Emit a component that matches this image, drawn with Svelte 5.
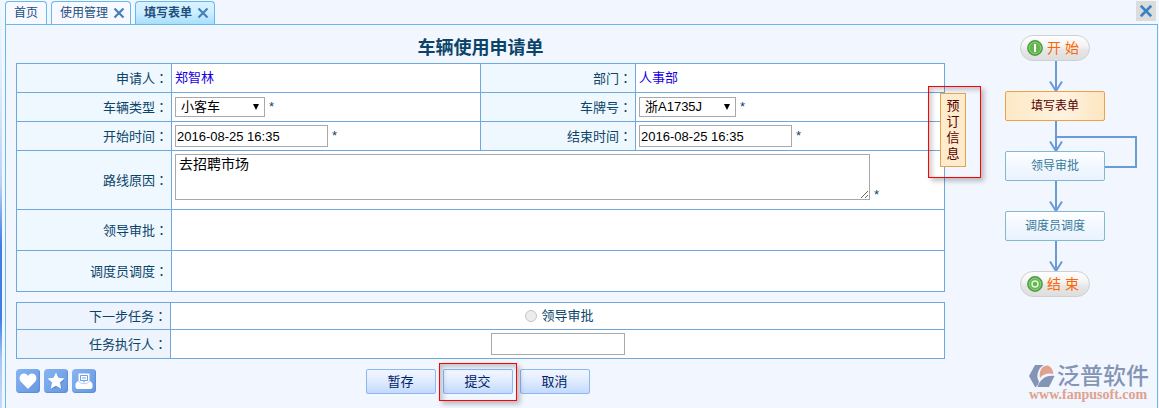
<script lang="ts">
	interface Tab {
		title: string;
		closable: boolean;
	}

	const tabs: Tab[] = [
		{ title: '首页', closable: false },
		{ title: '使用管理', closable: true },
		{ title: '填写表单', closable: true }
	];

	let active = $state('填写表单');
	let carType = $state('小客车');
	let plate = $state('浙A1735J');
	let startTime = $state('2016-08-25 16:35');
	let endTime = $state('2016-08-25 16:35');
	let reason = $state('去招聘市场');
	let executor = $state('');
</script>

{#snippet cross(size: number)}
	<svg width={size} height={size} viewBox="0 0 12 12" aria-hidden="true">
		<path d="M1.5 1.5L10.5 10.5M10.5 1.5L1.5 10.5" fill="none" stroke="currentColor" stroke-width="2.2" />
	</svg>
{/snippet}

{#snippet name(text: string)}
	{text}<span class="colon">：</span>
{/snippet}

{#snippet arrow()}
	<svg class="arrow" width="16" height="30" viewBox="0 0 16 30" aria-hidden="true">
		<path d="M9 0V30M3 20.500L9 30L15 20.500" fill="none" stroke="#6b9ad8" stroke-width="2" />
	</svg>
{/snippet}

<div class="page">
	<nav class="tabs">
		{#each tabs as tab}
			<div class="tab" class:active={tab.title === active}>
				<button class="tab-title" onclick={() => (active = tab.title)}>{tab.title}</button>
				{#if tab.closable}
					<button class="tab-close" aria-label="关闭">{@render cross(12)}</button>
				{/if}
			</div>
		{/each}
		<button class="close-all" aria-label="关闭">{@render cross(14)}</button>
	</nav>

	<div class="panel">
		<main class="main">
			<h1>车辆使用申请单</h1>

			<div class="sheet">
				<table class="form">
					<colgroup>
						<col class="c-label" />
						<col />
						<col class="c-label" />
						<col />
					</colgroup>
					<tbody>
						<tr>
							<th>{@render name('申请人')}</th>
							<td class="who">郑智林</td>
							<th>{@render name('部门')}</th>
							<td class="who">人事部</td>
						</tr>
						<tr>
							<th><label for="car-type">{@render name('车辆类型')}</label></th>
							<td>
								<div class="field">
									<span class="select type">
										<select id="car-type" bind:value={carType}><option>小客车</option></select>
									</span>
									<span class="req">*</span>
								</div>
							</td>
							<th><label for="plate">{@render name('车牌号')}</label></th>
							<td>
								<div class="field">
									<span class="select plate">
										<select id="plate" bind:value={plate}><option>浙A1735J</option></select>
									</span>
									<span class="req">*</span>
								</div>
							</td>
						</tr>
						<tr>
							<th><label for="start">{@render name('开始时间')}</label></th>
							<td>
								<div class="field">
									<input id="start" class="time" type="text" bind:value={startTime} />
									<span class="req">*</span>
								</div>
							</td>
							<th><label for="end">{@render name('结束时间')}</label></th>
							<td>
								<div class="field">
									<input id="end" class="time" type="text" bind:value={endTime} />
									<span class="req">*</span>
								</div>
							</td>
						</tr>
						<tr class="reason">
							<th><label for="reason">{@render name('路线原因')}</label></th>
							<td colspan="3">
								<div class="field bottom">
									<textarea id="reason" bind:value={reason}></textarea>
									<span class="req">*</span>
								</div>
							</td>
						</tr>
						<tr class="opinion">
							<th>{@render name('领导审批')}</th>
							<td colspan="3"></td>
						</tr>
						<tr class="opinion">
							<th>{@render name('调度员调度')}</th>
							<td colspan="3"></td>
						</tr>
					</tbody>
				</table>

				<div class="booking mark">
					<button>预订信息</button>
				</div>
			</div>

			<table class="next">
				<tbody>
					<tr>
						<th>{@render name('下一步任务')}</th>
						<td>
							<label class="choice"><input type="radio" name="next" disabled />领导审批</label>
						</td>
					</tr>
					<tr class="person">
						<th><label for="executor">{@render name('任务执行人')}</label></th>
						<td><input id="executor" type="text" bind:value={executor} /></td>
					</tr>
				</tbody>
			</table>

			<div class="toolbar">
				<div class="tools">
					<button aria-label="收藏">
						<svg width="24" height="24" viewBox="0 0 24 24">
							<path d="M13 21L5 13.500C2.500 10.500 4 5.500 8 5.500C10 5.500 11.200 6.500 12 8C12.800 6.500 14 5.500 16 5.500C20 5.500 21.500 10.500 19 13.500L12 20.500Z" fill="#3f6db8" opacity="0.5" />
							<path d="M12 20L5 13C2 9.500 4 4.500 8 4.500C10 4.500 11.300 5.500 12 7C12.700 5.500 14 4.500 16 4.500C20 4.500 22 9.500 19 13Z" fill="#fff" />
						</svg>
					</button>
					<button aria-label="关注">
						<svg width="24" height="24" viewBox="0 0 24 24">
							<path d="M13 5L15.500 10L21 10.700L17 14.500L18 20.500L13 17.800L8 20.500L8.500 15L5 10.500L10.500 10Z" fill="#3f6db8" opacity="0.5" />
							<path d="M12 3.500L14.500 8.700L20.500 9.500L16 13.600L17.200 19.700L12 16.800L6.800 19.700L8 13.600L3.500 9.500L9.500 8.700Z" fill="#fff" />
						</svg>
					</button>
					<button aria-label="打印">
						<svg width="24" height="24" viewBox="0 0 24 24">
							<path d="M6.500 4.500H17.500V12.500H19L20.500 15V18.500L19 20H5L3.500 18.500V15L5 12.500H6.500Z" fill="#fff" />
							<path d="M8.500 6.500H15.500V11.500H8.500ZM10 9H14M12 11.500V13.500" fill="none" stroke="#6f9fe4" />
							<path d="M6.500 12.500L9.500 14.500H14.500L17.500 12.500" fill="none" stroke="#b9d2f5" />
						</svg>
					</button>
				</div>
				<div class="actions">
					<button>暂存</button>
					<div class="submit">
						<button>提交</button>
						<span class="ring mark"></span>
					</div>
					<button>取消</button>
				</div>
			</div>
		</main>

		<aside>
			<div class="flow">
				<div class="pill">
					<svg width="16" height="16" viewBox="0 0 16 16" aria-hidden="true">
						<circle cx="8" cy="8" r="7.200" fill="#62b74b" stroke="#4f9c4c" stroke-width="1.400" />
						<circle cx="8" cy="8" r="5.700" fill="none" stroke="#8ccd7c" />
						<path d="M8 4V12" stroke="#fff" stroke-width="2" />
					</svg>
					开 始
				</div>
				{@render arrow()}
				<div class="step current">填写表单</div>
				{@render arrow()}
				<div class="step">
					领导审批
					<svg class="loop" width="82" height="34" viewBox="0 0 82 34" aria-hidden="true">
						<path d="M0 2H80V32H49" fill="none" stroke="#6b9ad8" stroke-width="2" />
					</svg>
				</div>
				{@render arrow()}
				<div class="step">调度员调度</div>
				{@render arrow()}
				<div class="pill">
					<svg width="16" height="16" viewBox="0 0 16 16" aria-hidden="true">
						<circle cx="8" cy="8" r="7.200" fill="#62b74b" stroke="#4f9c4c" stroke-width="1.400" />
						<circle cx="8" cy="8" r="5.700" fill="none" stroke="#8ccd7c" />
						<circle cx="8" cy="8" r="3" fill="none" stroke="#e4f5df" stroke-width="1.500" />
					</svg>
					结 束
				</div>
			</div>

			<div class="brand">
				<div class="brand-name">
					<svg width="26" height="24" viewBox="0 0 26 24" aria-hidden="true">
						<path d="M6 1H14.500C10 4 8 9 8.500 14L10 18C9.500 20 8 22 7 23H6L0 12Z" fill="#8494b5" />
						<path d="M11 14C10 8 12 2 18 1.500C22 2 24 6 24.500 10C19 8.500 14 10 11 14Z" fill="#e0a18e" />
						<path d="M25.500 12L20 23H8.500C11 16 16 11 25.500 12Z" fill="#8494b5" />
					</svg>
					泛普软件
				</div>
				<div class="brand-url">www.fanpusoft.com</div>
			</div>
		</aside>
	</div>
</div>

<style>
	:global(body) {
		background: #f1f6ff;
	}

	.page {
		--line: #6fa8dc;
		--edge: #69b8ea;
		--ink: #0b4468;
		--sans: 'Liberation Sans', 'Noto Sans CJK SC', sans-serif;
		box-sizing: border-box;
		min-height: 100vh;
		display: flex;
		flex-direction: column;
		padding: 1px 1px 0 5px;
		font: 13px/18px var(--sans);
		color: var(--ink);
		background:
			linear-gradient(#f1f6ff 0%, #e4edfb 18%, #bcd0f2 45%, #3f7de6 60%, #3f7de6 78%, #a9c6f3 88%, #c8dbf6 100%) 0 0 / 2px 100% no-repeat,
			#f1f6ff;
	}

	button,
	input,
	select,
	textarea {
		box-sizing: border-box;
		margin: 0;
		font: inherit;
		color: inherit;
	}

	button {
		padding: 0;
		border: 0;
		background: none;
		cursor: pointer;
	}

	svg {
		display: block;
	}

	.tabs {
		display: flex;
		gap: 4px;
		height: 23px;
	}

	.tab {
		display: flex;
		align-items: center;
		gap: 5px;
		padding: 0 5px 0 8px;
		border: 1px solid var(--edge);
		border-bottom: 0;
		border-radius: 4px 4px 0 0;
		background: #f6f9ff;
		font-size: 12px;
		color: #1d4f7c;
	}

	.tab:first-child {
		padding-right: 8px;
	}

	.tab.active {
		background: linear-gradient(#d8f2ff, #d0efff 45%, #a6dffc);
		font-weight: bold;
	}

	.tab-close {
		color: #4580ba;
	}

	.close-all {
		display: grid;
		place-items: center;
		width: 20px;
		height: 20px;
		margin-left: auto;
		margin-right: 2px;
		background: #dcdcdc;
		color: #3a82c4;
	}

	.panel {
		flex: 1;
		display: flex;
		border: 1px solid var(--edge);
		border-bottom: 0;
	}

	.main {
		flex: 1;
		padding: 0 0 7px 10px;
	}

	h1 {
		margin: 0;
		padding: 11px 0 3px;
		font-size: 18px;
		line-height: 24px;
		text-align: center;
	}

	.sheet {
		position: relative;
	}

	table {
		width: 100%;
		border-collapse: collapse;
		table-layout: fixed;
		background: #fff;
	}

	th,
	td {
		box-sizing: border-box;
		padding: 0 3px;
		border: 1px solid var(--line);
	}

	th {
		height: 29px;
		width: 154px;
		padding-right: 3px;
		font-weight: normal;
		text-align: right;
		background: #f0f8ff;
	}

	.c-label {
		width: 155px;
	}

	.colon {
		font-family: 'Noto Sans CJK JP', sans-serif;
	}

	.who {
		color: #1a00e0;
	}

	.field {
		display: flex;
		align-items: center;
		gap: 4px;
	}

	.field.bottom {
		align-items: flex-end;
	}

	.bottom .req {
		line-height: 10px;
	}

	.select {
		position: relative;
	}

	.select::after {
		content: '';
		position: absolute;
		top: 7px;
		right: 6px;
		border: 3px solid transparent;
		border-top: 6px solid #000;
		border-bottom: 0;
		pointer-events: none;
	}

	select {
		display: block;
		width: 100%;
		height: 20px;
		padding: 0 5px;
		border: 1px solid #a9a9a9;
		border-radius: 0;
		appearance: none;
		background: #fff;
		color: #000;
	}

	.type {
		width: 90px;
	}

	.plate {
		width: 97px;
	}

	input[type='text'] {
		height: 22px;
		padding: 0 1px;
		border: 1px solid #a9a9a9;
		background: #fff;
		color: #000;
	}

	.time {
		width: 153px;
	}

	.reason th {
		height: 59px;
	}

	.reason td {
		padding-top: 3px;
		vertical-align: top;
	}

	textarea {
		display: block;
		flex: 0 1 695px;
		height: 46px;
		padding: 0 3px;
		border: 1px solid #a9a9a9;
		background: #fff;
		font-size: 14px;
		line-height: 18px;
		color: #000;
	}

	.opinion th {
		height: 41px;
	}

	.mark {
		border: 1px solid #f00;
		box-shadow:
			3px 3px 5px rgba(0, 0, 0, 0.25),
			inset 3px 3px 5px rgba(0, 0, 0, 0.2);
	}

	.booking {
		position: absolute;
		top: 23px;
		right: -36px;
		padding: 6px 14px 10px 11px;
	}

	.booking button {
		width: 26px;
		height: 74px;
		padding: 0 5px;
		border: 1px solid #e3a452;
		background: #fdebcb;
		line-height: 16px;
		color: #500;
	}

	.next {
		margin-top: 10px;
	}

	.next th {
		height: 27px;
		background: #eef4fd;
	}

	.next td {
		text-align: center;
	}

	.next .person th {
		height: 29px;
	}

	.next td input {
		display: block;
		width: 134px;
		margin: 0 auto;
	}

	.choice {
		display: flex;
		align-items: center;
		justify-content: center;
		gap: 4px;
		padding-left: 4px;
	}

	.next .choice input {
		appearance: none;
		width: 12px;
		height: 12px;
		margin: 0;
		border: 1px solid #c4c4c4;
		border-radius: 50%;
		background: #ececec;
	}

	.toolbar {
		display: grid;
		grid-template-columns: 1fr auto 1fr;
		margin-top: 10px;
		padding-right: 6px;
	}

	.tools,
	.actions {
		display: flex;
		gap: 4px;
	}

	.tools button {
		width: 24px;
		height: 24px;
		border-radius: 4px;
		background: linear-gradient(135deg, #86b4f2, #6699e2);
		box-shadow: inset -1px -1px 1px #5f8fd4;
	}

	.actions {
		gap: 7px;
	}

	.actions button {
		width: 70px;
		height: 25px;
		border: 1px solid #8bb8f5;
		border-radius: 2px;
		background: linear-gradient(#f2f7ff, #dfebff 50%, #c3daff);
		color: #002266;
	}

	.submit {
		position: relative;
	}

	.ring {
		position: absolute;
		inset: -6px -4px -7px;
		pointer-events: none;
	}

	aside {
		flex: 0 0 204px;
		display: flex;
		flex-direction: column;
		align-items: center;
		padding: 10px 0 6px 8px;
	}

	.flow {
		display: flex;
		flex-direction: column;
		align-items: center;
	}

	.pill {
		box-sizing: border-box;
		display: flex;
		align-items: center;
		gap: 4px;
		width: 70px;
		height: 26px;
		padding-left: 6px;
		border: 1px solid #d0d0d0;
		border-radius: 13px;
		background: linear-gradient(#fff, #f4f4f4 40%, #e6e6e6 60%, #dedede);
		font-size: 14px;
		color: #f60;
		white-space: nowrap;
	}

	.arrow {
		position: relative;
		z-index: 1;
	}

	.step {
		position: relative;
		box-sizing: border-box;
		width: 100px;
		height: 30px;
		border: 1px solid #7fb9d2;
		border-radius: 2px;
		background: linear-gradient(#fff, #f6faff 30%, #e9f2fe);
		font-size: 12px;
		line-height: 28px;
		text-align: center;
		color: #357b9b;
	}

	.step.current {
		border-color: #f0a04b;
		background: linear-gradient(90deg, #fde9c6, #fff2df 60%, #fde6c0);
		color: #500;
	}

	.loop {
		position: absolute;
		top: -17px;
		left: 50px;
	}

	.brand {
		align-self: flex-end;
		margin-top: auto;
		padding-right: 8px;
	}

	.brand-name {
		display: flex;
		align-items: center;
		gap: 2px;
		font-size: 23px;
		font-weight: 500;
		line-height: 24px;
		color: #8494b5;
	}

	.brand-url {
		font: bold 14px/14px 'Liberation Serif', serif;
		color: #e0a18e;
	}
</style>
